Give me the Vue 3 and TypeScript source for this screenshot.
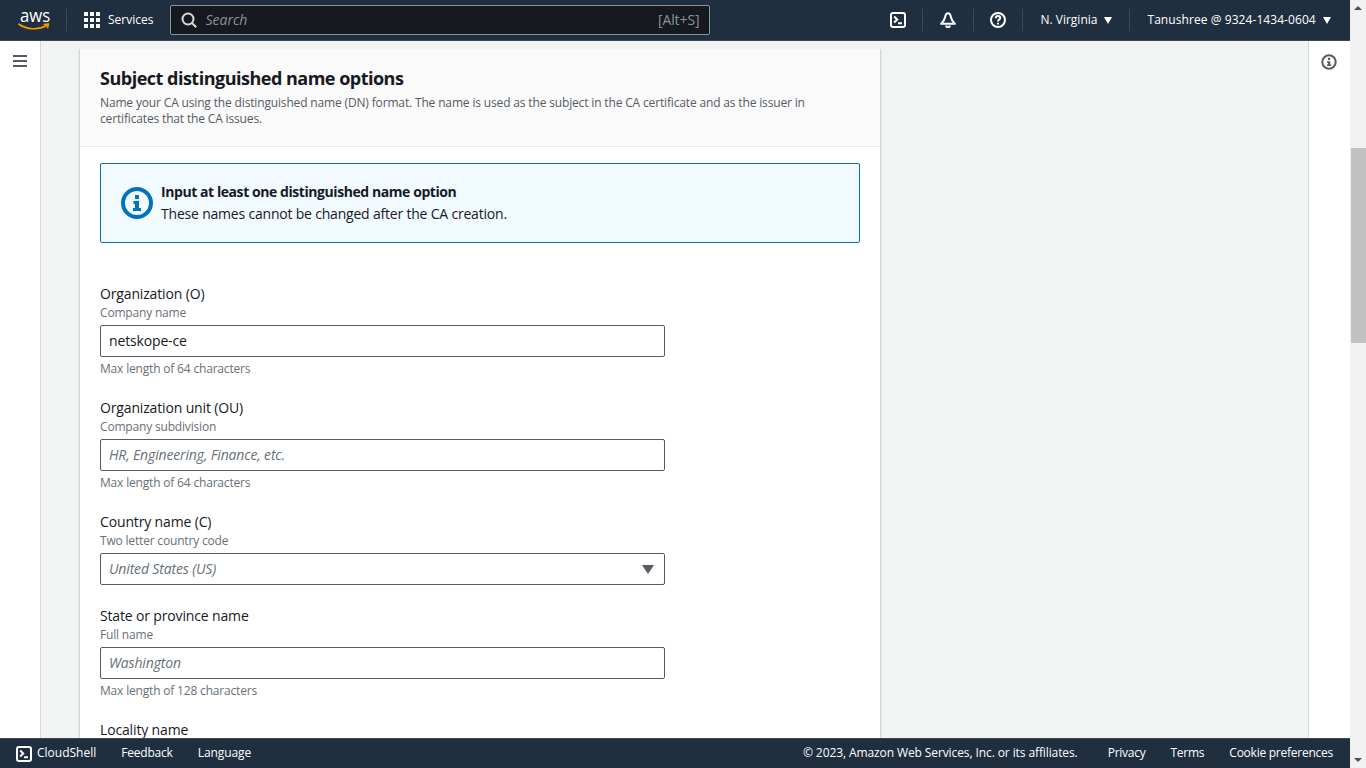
<script setup lang="ts">
interface Field {
  label: string
  hint?: string
  value?: string
  placeholder?: string
  constraint?: string
  select?: boolean
  labelOnly?: boolean
}

const fields: Field[] = [
  { label: 'Organization (O)', hint: 'Company name', value: 'netskope-ce', constraint: 'Max length of 64 characters' },
  { label: 'Organization unit (OU)', hint: 'Company subdivision', placeholder: 'HR, Engineering, Finance, etc.', constraint: 'Max length of 64 characters' },
  { label: 'Country name (C)', hint: 'Two letter country code', placeholder: 'United States (US)', select: true },
  { label: 'State or province name', hint: 'Full name', placeholder: 'Washington', constraint: 'Max length of 128 characters' },
  // the rest of this field is below the fold
  { label: 'Locality name', labelOnly: true },
]

const dots = Array.from({ length: 9 }, (_, i) => i)
const footerLinks = ['Privacy', 'Terms', 'Cookie preferences']
</script>

<template>
  <div class="window">
    <div class="app">
      <header class="topbar">
        <div class="logo">
          <span class="logo-text">aws</span>
          <svg class="smile" width="32" height="8" viewBox="0 0 32 8">
            <path d="M1 1.2C9 6.6 20 7.4 28.6 2.6" fill="none" stroke="#ff9900" stroke-width="1.7" stroke-linecap="round" />
            <path d="M25.6 1.4 L30.6 .9 L29.4 5.2" fill="none" stroke="#ff9900" stroke-width="1.5" stroke-linejoin="round" />
          </svg>
        </div>
        <span class="sep logo-sep"></span>
        <div class="services">
          <span class="grid-icon"><i v-for="d in dots" :key="d"></i></span>
          <span class="bar-text">Services</span>
        </div>
        <div class="search">
          <svg width="16" height="16" viewBox="0 0 16 16" fill="none" stroke="#d5dbdb" stroke-width="2">
            <circle cx="7" cy="7" r="5.5" />
            <path d="M11 11l4.2 4.2" />
          </svg>
          <span class="search-text">Search</span>
          <span class="search-key">[Alt+S]</span>
        </div>
        <div class="top-right">
          <svg class="shell-top" width="16" height="16" viewBox="0 0 16 16" fill="none" stroke="#fff" stroke-width="2">
            <rect x="1" y="1" width="14" height="14" rx="2" />
            <path d="M4.2 4.5 7.2 7.5 4.2 10.5M8 11.2h4" />
          </svg>
          <span class="sep s1"></span>
          <svg class="bell" width="16" height="16" viewBox="0 0 16 16" fill="none" stroke="#fff" stroke-width="2" stroke-linejoin="round">
            <path d="M8 1.2C5.8 1.2 5.4 3 5 5.5 4.6 8 2.8 9.8 1 11.8h14C13.2 9.8 11.4 8 11 5.5 10.6 3 10.2 1.2 8 1.2Z" />
            <path d="M6.2 13.4a1.8 1.8 0 0 0 3.6 0" />
          </svg>
          <span class="sep s2"></span>
          <svg class="help" width="16" height="16" viewBox="0 0 16 16" fill="none" stroke="#fff" stroke-width="2">
            <circle cx="8" cy="8" r="7" />
            <path d="M5.8 6.2C5.8 4.8 6.8 4 8 4s2.2.8 2.2 2C10.2 7.6 8 7.6 8 9.6" />
            <path d="M8 10.8v1.6" />
          </svg>
          <span class="sep s3"></span>
          <span class="menu region"><span class="bar-text">N. Virginia</span><i class="caret"></i></span>
          <span class="sep s4"></span>
          <span class="menu account"><span class="bar-text wide">Tanushree @ 9324-1434-0604</span><i class="caret"></i></span>
        </div>
      </header>

      <div class="middle">
        <aside class="nav-rail">
          <span class="burger"><i></i><i></i><i></i></span>
        </aside>

        <main class="content">
          <section class="card">
            <div class="card-head">
              <h2>Subject distinguished name options</h2>
              <p>Name your CA using the distinguished name (DN) format. The name is used as the subject in the CA certificate and as the issuer in certificates that the CA issues.</p>
            </div>
            <div class="card-body">
              <div class="alert">
                <svg width="32" height="32" viewBox="0 0 32 32">
                  <circle cx="16" cy="16" r="14" fill="none" stroke="#0073bb" stroke-width="4" />
                  <rect x="14" y="8" width="4" height="4" fill="#0073bb" />
                  <path d="M12.5 14h5.5v7h2v3h-8v-3h2v-4h-1.5z" fill="#0073bb" />
                </svg>
                <div>
                  <div class="alert-title">Input at least one distinguished name option</div>
                  <div class="alert-text">These names cannot be changed after the CA creation.</div>
                </div>
              </div>

              <div class="fields">
                <div v-for="f in fields" :key="f.label" class="field">
                  <div class="label">{{ f.label }}</div>
                  <template v-if="!f.labelOnly">
                    <div class="hint">{{ f.hint }}</div>
                    <div class="input">
                      <span v-if="f.value" class="value">{{ f.value }}</span>
                      <span v-else class="placeholder">{{ f.placeholder }}</span>
                      <i v-if="f.select" class="select-caret"></i>
                    </div>
                    <div v-if="f.constraint" class="hint constraint">{{ f.constraint }}</div>
                  </template>
                </div>
              </div>
            </div>
          </section>
        </main>

        <aside class="tools-rail">
          <svg width="16" height="16" viewBox="0 0 16 16">
            <circle cx="8" cy="8" r="6.7" fill="none" stroke="#545b64" stroke-width="2" />
            <rect x="7" y="3.8" width="2.2" height="2.2" fill="#545b64" />
            <path d="M6 7.2h3.2v3.2h1v1.6H6v-1.6h1V8.8H6z" fill="#545b64" />
          </svg>
        </aside>
      </div>

      <footer class="footer">
        <svg class="shell-foot" width="16" height="16" viewBox="0 0 16 16" fill="none" stroke="#fff" stroke-width="2">
          <rect x="1" y="1" width="14" height="14" rx="2" />
          <path d="M4.2 4.5 7.2 7.5 4.2 10.5M8 11.2h4" />
        </svg>
        <span class="foot-link cloudshell">CloudShell</span>
        <span class="foot-link feedback">Feedback</span>
        <span class="foot-link">Language</span>
        <span class="copyright">© 2023, Amazon Web Services, Inc. or its affiliates.</span>
        <span v-for="l in footerLinks" :key="l" class="foot-link right-link">{{ l }}</span>
      </footer>
    </div>

    <div class="scrollbar">
      <i class="arrow up"></i>
      <div class="thumb"></div>
      <i class="arrow down"></i>
    </div>
  </div>
</template>

<style>
html,
body {
  margin: 0;
  overflow: hidden;
}
</style>

<style scoped>
.window {
  display: flex;
  width: 1366px;
  height: 768px;
  overflow: hidden;
  font-family: 'Open Sans', 'Noto Sans', sans-serif;
  color: #16191f;
  background: #f2f3f3;
}
.app {
  width: 1350px;
  display: flex;
  flex-direction: column;
}
.topbar {
  flex: none;
  height: 40px;
  border-bottom: 1px solid #414750;
  background: #1f2f40;
  display: flex;
  align-items: center;
  color: #fff;
  font-size: 12px;
  padding-left: 18px;
}
.bar-text {
  line-height: 16px;
  padding-bottom: 1px;
}
.bar-text.wide {
  letter-spacing: 0.07px;
}
.logo {
  width: 32px;
  height: 24px;
  position: relative;
  flex: none;
}
.logo-text {
  display: block;
  font-size: 19px;
  line-height: 16px;
  text-align: center;
  margin-top: -1px;
  transform: scaleX(0.88);
}
.smile {
  position: absolute;
  left: 0;
  top: 15px;
}
.sep {
  flex: none;
  width: 1px;
  height: 22px;
  background: #414750;
}
.logo-sep {
  margin-left: 16px;
}
.services {
  display: flex;
  align-items: center;
  margin-left: 17px;
}
.grid-icon {
  display: grid;
  grid-template-columns: repeat(3, 4px);
  gap: 2px;
  width: 16px;
  margin-right: 8px;
}
.grid-icon i {
  height: 4px;
  background: #fff;
}
.search {
  flex: none;
  margin-left: 17px;
  width: 540px;
  height: 30px;
  box-sizing: border-box;
  border: 1px solid #879596;
  border-radius: 2px;
  background: #16191f;
  display: flex;
  align-items: center;
  padding: 0 10px 0 10px;
  font-size: 14px;
  color: #879596;
}
.search-text {
  font-style: italic;
  margin-left: 8px;
  padding-bottom: 1px;
}
.search-key {
  margin-left: auto;
  font-size: 14px;
  letter-spacing: -0.1px;
  padding-bottom: 1px;
}
.top-right {
  flex: 1;
  display: flex;
  align-items: center;
}
.shell-top {
  margin-left: 180px;
}
.s1 {
  margin-left: 16px;
}
.bell {
  margin-left: 17px;
}
.s2 {
  margin-left: 17px;
}
.help {
  margin-left: 16px;
}
.s3 {
  margin-left: 16px;
}
.menu {
  white-space: nowrap;
  display: flex;
  align-items: center;
}
.region {
  margin-left: 17px;
}
.s4 {
  margin-left: 17px;
}
.account {
  margin-left: 17px;
}
.caret {
  display: inline-block;
  width: 0;
  height: 0;
  margin-left: 7px;
  border-left: 4.5px solid transparent;
  border-right: 4.5px solid transparent;
  border-top: 7px solid #fff;
}
.middle {
  flex: 1;
  min-height: 0;
  display: flex;
}
.nav-rail {
  flex: none;
  width: 40px;
  background: #fff;
  border-right: 1px solid #d5dbdb;
}
.burger {
  display: block;
  width: 14px;
  margin: 14px 0 0 13px;
}
.burger i {
  display: block;
  height: 2px;
  background: #545b64;
  margin-bottom: 3px;
}
.content {
  flex: 1;
  min-width: 0;
  display: flex;
  overflow: hidden;
  padding: 8px 0 0 38px;
}
.card {
  width: 800px;
  background: #fff;
  border-right: 1px solid #d5dbdb;
  border-left: 1px solid #d5dbdb;
  box-shadow: 0 1px 1px 0 rgba(0, 28, 36, 0.3);
}
.card-head {
  background: #fafafa;
  border-bottom: 1px solid #eaeded;
  padding: 18px 20px 21px;
  height: 98px;
  box-sizing: border-box;
}
.card-head h2 {
  margin: 0;
  font-size: 18px;
  line-height: 22px;
  font-weight: 700;
  letter-spacing: -0.5px;
}
.card-head p {
  margin: 6px 0 0;
  font-size: 12px;
  line-height: 16px;
  letter-spacing: -0.155px;
  color: #545b64;
  max-width: 740px;
}
.card-body {
  padding: 16px 20px 0;
}
.alert {
  height: 80px;
  box-sizing: border-box;
  display: flex;
  align-items: center;
  gap: 8px;
  padding: 0 20px;
  background: #f1faff;
  border: 1px solid #0073bb;
  border-radius: 2px;
}
.alert-title {
  font-size: 14px;
  line-height: 22px;
  font-weight: 700;
  letter-spacing: -0.43px;
}
.alert-text {
  font-size: 14px;
  line-height: 22px;
  letter-spacing: -0.2px;
}
.fields {
  margin-top: 41px;
}
.field {
  width: 565px;
  margin-bottom: 21px;
}
.label {
  font-size: 14px;
  line-height: 20px;
  letter-spacing: -0.15px;
}
.hint {
  font-size: 12px;
  line-height: 16px;
  margin-top: 1px;
  letter-spacing: -0.18px;
  color: #687078;
}
.input {
  height: 32px;
  box-sizing: border-box;
  margin-top: 4px;
  border: 1px solid #545b64;
  border-radius: 2px;
  padding: 0 8px;
  background: #fff;
  display: flex;
  align-items: center;
  justify-content: space-between;
  font-size: 14px;
  letter-spacing: -0.15px;
}
.value,
.placeholder {
  padding-bottom: 2px;
}
.placeholder {
  font-style: italic;
  color: #687078;
}
.constraint {
  margin-top: 4px;
}
.select-caret {
  width: 0;
  height: 0;
  margin-right: 2px;
  border-left: 6px solid transparent;
  border-right: 6px solid transparent;
  border-top: 9px solid #545b64;
}
.tools-rail {
  flex: none;
  width: 42px;
  box-sizing: border-box;
  background: #fff;
  border-left: 1px solid #d5dbdb;
  padding: 12px 0 0 12px;
}
.footer {
  flex: none;
  height: 30px;
  box-sizing: border-box;
  border-top: 1px solid #414750;
  background: #1f2f40;
  display: flex;
  align-items: center;
  padding-left: 16px;
  color: #fff;
  font-size: 12px;
  line-height: 16px;
}
.foot-link,
.copyright {
  white-space: nowrap;
  padding-bottom: 2px;
}
.cloudshell {
  margin-left: 5px;
}
.feedback {
  margin-left: 25px;
  margin-right: 25px;
  letter-spacing: -0.2px;
}
.foot-link:nth-of-type(3) {
  letter-spacing: -0.1px;
}
.copyright {
  margin-left: auto;
  margin-right: 30px;
  letter-spacing: -0.1px;
}
.right-link {
  margin-right: 25px;
  letter-spacing: -0.25px;
}
.right-link:last-child {
  margin-right: 17px;
}
.scrollbar {
  flex: none;
  width: 16px;
  background: #f1f1f1;
  display: flex;
  flex-direction: column;
  align-items: center;
}
.thumb {
  width: 15px;
  height: 195px;
  margin-top: 138px;
  background: #c1c1c1;
}
.arrow {
  width: 0;
  height: 0;
  border-left: 4px solid transparent;
  border-right: 4px solid transparent;
}
.arrow.up {
  margin-top: 6px;
  border-bottom: 4px solid #505050;
}
.arrow.down {
  margin-top: auto;
  margin-bottom: 6px;
  border-top: 4px solid #505050;
}
</style>
